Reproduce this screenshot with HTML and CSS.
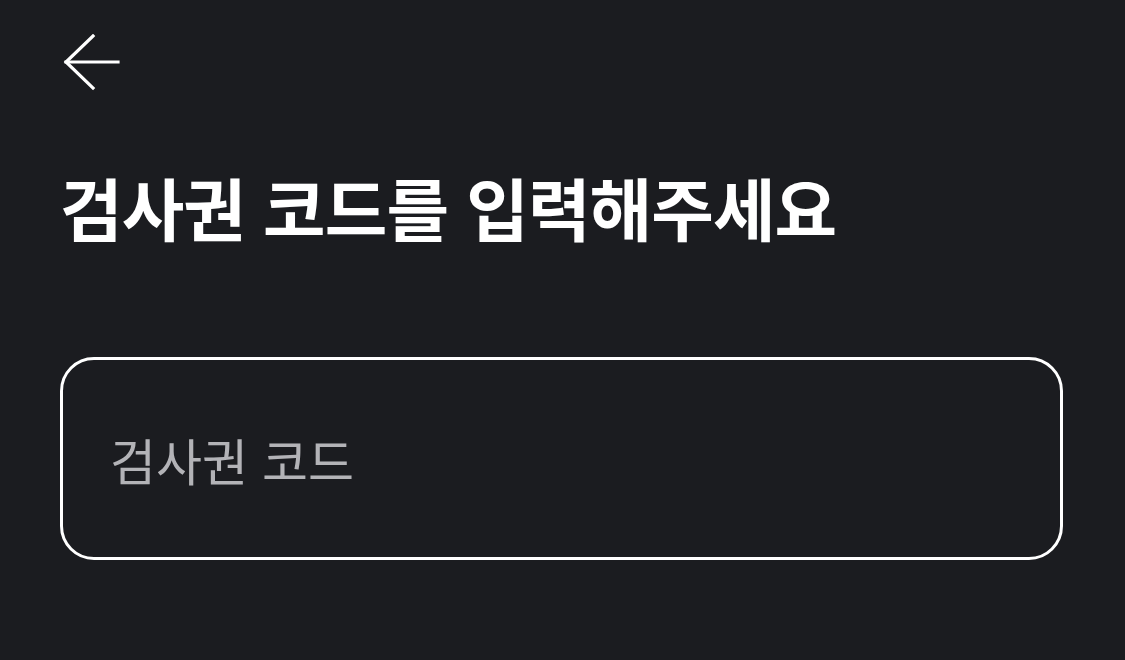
FILE: index.html
```html
<!DOCTYPE html>
<html lang="ko">
<head>
<meta charset="utf-8">
<link rel="stylesheet" href="styles.css">
</head>
<body>
<div class="page">
  <header class="topbar">
    <button class="back" aria-label="뒤로">
      <svg width="60" height="60" viewBox="0 0 60 60" fill="none" stroke="#ffffff" stroke-width="3.2" stroke-linecap="square">
        <path d="M6 28 H58"/>
        <path d="M33 2 L6 28 L33 54"/>
      </svg>
    </button>
  </header>
  <h1 class="title">검사권 코드를 입력해주세요</h1>
  <div class="field">
    <input class="code-input" type="text" placeholder="검사권 코드">
  </div>
</div>
</body>
</html>
```

FILE: styles.css
```css
html, body {
  margin: 0;
  padding: 0;
  background: #1b1c20;
}
body {
  font-family: "Noto Sans CJK KR", "Noto Sans", sans-serif;
  color: #ffffff;
}
.page {
  padding: 0 62px 0 60px;
}
.topbar {
  height: 162px;
  display: flex;
  align-items: flex-start;
  padding-top: 34px;
  box-sizing: border-box;
}
.back {
  background: none;
  border: 0;
  padding: 0;
  margin: 0;
  display: block;
  cursor: pointer;
}
.back svg {
  display: block;
}
.title {
  margin: 0;
  font-size: 68px;
  font-weight: 700;
  line-height: 90px;
  letter-spacing: -0.9px;
}
.field {
  margin-top: 105px;
}
.code-input {
  display: block;
  box-sizing: border-box;
  width: 100%;
  height: 203px;
  border: 3px solid #ffffff;
  border-radius: 34px;
  background: transparent;
  padding: 0 0 0 47px;
  font-family: "Noto Sans CJK KR", "Noto Sans", sans-serif;
  font-size: 50px;
  color: #ffffff;
  outline: none;
}
.code-input::placeholder {
  color: #b3b3b7;
}
```
